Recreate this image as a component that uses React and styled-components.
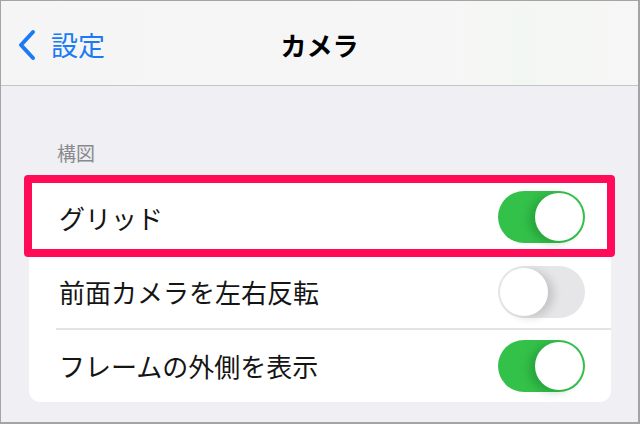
import styled, { createGlobalStyle } from "styled-components";

const GlobalStyle = createGlobalStyle`
  html, body {
    margin: 0;
    padding: 0;
    background: #efeff4;
  }
  * {
    box-sizing: border-box;
  }
`;

const Screen = styled.div`
  width: 640px;
  height: 424px;
  overflow: hidden;
  background: #efeff4;
  border-style: solid;
  border-color: #a4a4a6;
  border-width: 1px 2px 2px 1px;
  font-family: "Noto Sans CJK JP", "Noto Sans", sans-serif;
  display: flex;
  flex-direction: column;
`;

const NavBar = styled.header`
  height: 85px;
  flex-shrink: 0;
  background: linear-gradient(90deg, #f5f5f5 0%, #f6f6f6 70%, #f3f7f2 82%, #f6f6f6 100%);
  border-bottom: 1px solid #c4c4c6;
  display: grid;
  grid-template-columns: 1fr auto 1fr;
  align-items: center;
`;

const BackButton = styled.button`
  justify-self: start;
  display: flex;
  align-items: center;
  gap: 14px;
  margin: 3px 0 0 16px;
  padding: 0;
  border: none;
  background: none;
  color: #1a7bf5;
  font-family: inherit;
  font-size: 27px;
  font-weight: 400;
  cursor: pointer;
`;

const NavTitle = styled.h1`
  margin: 3px 0 0;
  font-size: 26px;
  font-weight: 700;
  color: #000;
`;

const Content = styled.main`
  padding: 53px 27px 0 28px;
`;

const SectionLabel = styled.div`
  font-size: 19px;
  color: #8a8a8e;
  margin: 0 0 13px 28px;
  line-height: 28px;
`;

const Card = styled.div`
  background: #fff;
  border-radius: 11px;
`;

const Row = styled.div`
  position: relative;
  height: 74px;
  display: flex;
  align-items: center;
  justify-content: space-between;
  padding: 0 26px 0 30px;

  & + & {
    border-top: 1px solid transparent;
  }

  & + &::before {
    content: "";
    position: absolute;
    top: -1px;
    left: 27px;
    right: 0;
    height: 2px;
    background: #e4e4e8;
  }
`;

const Highlight = styled.div`
  position: absolute;
  inset: -5px -4px -3px -5px;
  border: 8px solid #ff0b57;
  border-radius: 4px;
  pointer-events: none;
  z-index: 2;
`;

const Label = styled.span`
  font-size: 26px;
  color: #151515;
`;

const Toggle = styled.div`
  width: 87px;
  height: 52px;
  border-radius: 26px;
  background: ${(p) => (p.$on ? "#34c14a" : "#e6e6e8")};
  position: relative;
  flex-shrink: 0;
`;

const Knob = styled.div`
  position: absolute;
  top: 2px;
  left: ${(p) => (p.$on ? "37px" : "2px")};
  width: 48px;
  height: 48px;
  border-radius: 50%;
  background: #fff;
  box-shadow: ${(p) =>
    p.$on
      ? "-6px 2px 8px rgba(0, 80, 20, 0.25)"
      : "6px 2px 8px rgba(0, 0, 0, 0.14)"};
`;

const Chevron = () => (
  <svg width="20" height="32" viewBox="0 0 20 32" fill="none">
    <path
      d="M16 3 L4 16 L16 29"
      stroke="#1a7bf5"
      strokeWidth="4"
      strokeLinecap="round"
      strokeLinejoin="round"
    />
  </svg>
);

const settings = [
  { label: "グリッド", on: true, highlight: true },
  { label: "前面カメラを左右反転", on: false },
  { label: "フレームの外側を表示", on: true },
];

export default function App() {
  return (
    <>
      <GlobalStyle />
      <Screen>
        <NavBar>
          <BackButton>
            <Chevron />
            設定
          </BackButton>
          <NavTitle>カメラ</NavTitle>
          <div />
        </NavBar>
        <Content>
          <SectionLabel>構図</SectionLabel>
          <Card>
            {settings.map((s) => (
              <Row key={s.label}>
                <Label>{s.label}</Label>
                <Toggle $on={s.on}>
                  <Knob $on={s.on} />
                </Toggle>
                {s.highlight && <Highlight />}
              </Row>
            ))}
          </Card>
        </Content>
      </Screen>
    </>
  );
}
